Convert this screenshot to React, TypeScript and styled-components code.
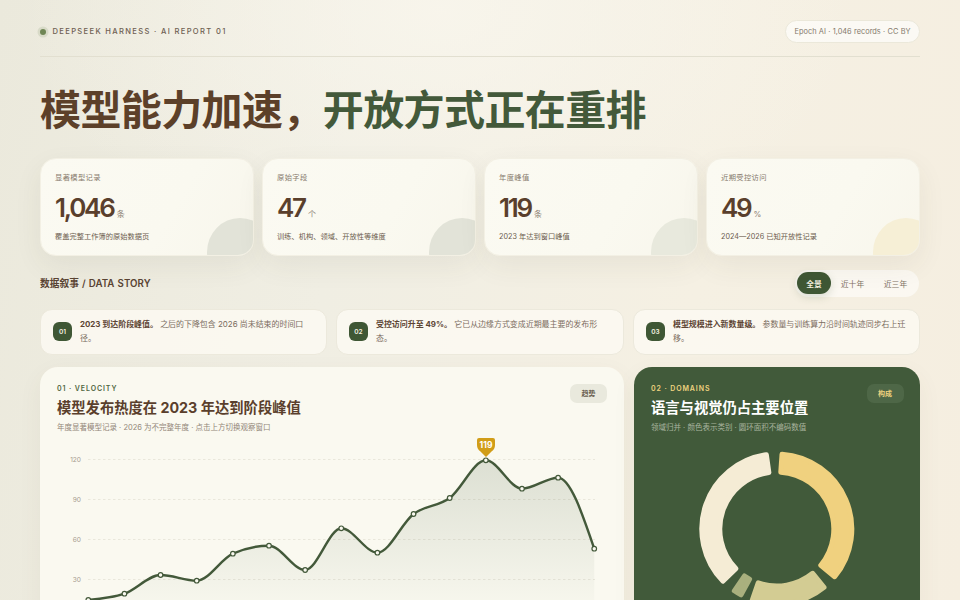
import React from "react";
import styled, { createGlobalStyle } from "styled-components";

const Global = createGlobalStyle`
  html, body { margin: 0; padding: 0; width: 960px; height: 600px; overflow: hidden; }
  body {
    font-family: Inter, "Noto Sans CJK SC", "Noto Sans", sans-serif;
    color: #5a3f2c;
    background:
      radial-gradient(ellipse 420px 260px at 440px 10px, rgba(250,247,238,.75), rgba(250,247,238,0)),
      linear-gradient(100deg, #ebe9dc 0%, #f0eee3 35%, #f5f0e3 70%, #f5eee0 100%);
  }
`;

const Page = styled.div`
  width: 960px;
  height: 600px;
  box-sizing: border-box;
  padding: 20px 40px 0;
  overflow: hidden;
`;
const TopBar = styled.header`
  display: flex;
  align-items: center;
  justify-content: space-between;
  padding-bottom: 13px;
  border-bottom: 1px solid #e2dfd0;
`;
const Brand = styled.div`
  display: flex;
  align-items: center;
  gap: 6.5px;
  font-size: 7.6px;
  font-weight: 500;
  letter-spacing: 1.33px;
  color: #6e6052;
`;
const Dot = styled.span`
  width: 6px;
  height: 6px;
  border-radius: 50%;
  background: #6f8654;
  box-shadow: 0 0 0 2.5px rgba(111,134,84,.16);
`;
const SourcePill = styled.div`
  height: 23px;
  box-sizing: border-box;
  display: flex;
  align-items: center;
  padding: 0 8.5px;
  border-radius: 12px;
  border: 1px solid #ebe8da;
  background: rgba(255,255,255,.62);
  font-size: 7.4px;
  word-spacing: .25px;
  color: #85796d;
`;
const Title = styled.h1`
  margin: 26px 0 0;
  height: 54px;
  line-height: 54px;
  font-size: 41px;
  font-weight: 700;
  letter-spacing: -.6px;
  color: #5c4029;
  white-space: nowrap;
`;
const Accent = styled.span`
  color: #43593a;
`;
const Stats = styled.section`
  margin-top: 21px;
  display: grid;
  grid-template-columns: repeat(4, 1fr);
  gap: 8px;
`;
const StatCard = styled.article`
  position: relative;
  overflow: hidden;
  height: 98px;
  box-sizing: border-box;
  padding: 14px 14px 0;
  border-radius: 16px;
  border: 1px solid #f3f0e4;
  background: linear-gradient(120deg, #fbfaf2 0%, #faf9f0 60%, #f8f6ec 100%);
  box-shadow: 0 10px 28px rgba(70,70,40,.07);
`;
const Bubble = styled.span<{ $tone: string }>`
  position: absolute;
  right: -20px;
  bottom: -31px;
  width: 66px;
  height: 68px;
  border-radius: 50%;
  background: ${(p) => p.$tone};
`;
const StatLabel = styled.div`
  font-size: 7.3px;
  line-height: 9px;
  letter-spacing: .35px;
  color: #887b6e;
`;
const StatValueRow = styled.div`
  margin-top: 11px;
  height: 30px;
  display: flex;
  align-items: baseline;
  gap: 3px;
`;
const StatValue = styled.span`
  font-size: 26px;
  line-height: 30px;
  font-weight: 600;
  letter-spacing: -2.2px;
  color: #5a3f2c;
`;
const StatUnit = styled.span`
  font-size: 8px;
  color: #8d8174;
`;
const StatNote = styled.div`
  margin-top: 9px;
  font-size: 7.25px;
  line-height: 10px;
  color: #6c5c4e;
`;
const SectionRow = styled.div`
  margin-top: 13.5px;
  height: 27px;
  display: flex;
  align-items: center;
  justify-content: space-between;
`;
const SectionTitle = styled.h2`
  margin: 0;
  font-size: 9.7px;
  font-weight: 600;
  letter-spacing: .05px;
  word-spacing: .6px;
  color: #5a4433;
`;
const Segments = styled.div`
  width: 124px;
  height: 27px;
  box-sizing: border-box;
  padding: 2px;
  margin-right: 1px;
  display: flex;
  align-items: center;
  border-radius: 14px;
  background: rgba(255,255,255,.55);
`;
const Segment = styled.span<{ $active?: boolean }>`
  flex: 0 0 ${(p) => (p.$active ? "34px" : "43px")};
  height: 22px;
  display: flex;
  align-items: center;
  justify-content: center;
  border-radius: 11px;
  font-size: 7.8px;
  color: ${(p) => (p.$active ? "#f7f3e3" : "#7f7264")};
  background: ${(p) => (p.$active ? "#3f5735" : "transparent")};
  font-weight: ${(p) => (p.$active ? 600 : 400)};
  box-shadow: ${(p) => (p.$active ? "0 3px 8px rgba(63,87,53,.18)" : "none")};
`;
const Insights = styled.section`
  margin-top: 12px;
  display: grid;
  grid-template-columns: 287px 288px 1fr;
  gap: 9px;
`;
const Insight = styled.article`
  height: 46px;
  box-sizing: border-box;
  display: flex;
  align-items: center;
  gap: 8px;
  padding: 0 12px;
  border-radius: 12px;
  border: 1px solid #ece9dc;
  background: rgba(252,250,243,.8);
`;
const Num = styled.span`
  flex: 0 0 19px;
  height: 19px;
  display: flex;
  align-items: center;
  justify-content: center;
  border-radius: 6px;
  background: #3f5735;
  color: #f7f3e3;
  font-size: 6.5px;
  font-weight: 600;
`;
const InsightText = styled.p`
  margin: 0;
  font-size: 7.95px;
  line-height: 13.4px;
  color: #7b6d5f;
`;
const InsightLead = styled.strong`
  font-weight: 700;
  color: #5c4433;
`;
const Panels = styled.section`
  margin-top: 12.5px;
  display: grid;
  grid-template-columns: minmax(0, 1fr) 286px;
  gap: 10.5px;
`;
const Panel = styled.article<{ $dark?: boolean }>`
  position: relative;
  height: 330px;
  box-sizing: border-box;
  padding: 17px;
  border-radius: 18px;
  background: ${(p) => (p.$dark ? "#415a3a" : "#faf9f0")};
  box-shadow: 0 8px 24px rgba(96,80,50,.06);
`;
const Kicker = styled.div<{ $dark?: boolean }>`
  font-size: 7px;
  line-height: 9px;
  font-weight: 600;
  letter-spacing: .9px;
  color: ${(p) => (p.$dark ? "#eed27f" : "#50663f")};
`;
const PanelTitle = styled.h3<{ $dark?: boolean }>`
  margin: 4px 0 0;
  font-size: 14.3px;
  line-height: 22px;
  font-weight: 700;
  color: ${(p) => (p.$dark ? "#ffffff" : "#5a3f2c")};
`;
const PanelSub = styled.p<{ $dark?: boolean }>`
  margin: 3px 0 0;
  font-size: 7.5px;
  line-height: 11px;
  color: ${(p) => (p.$dark ? "#a8b49f" : "#928678")};
`;
const Tag = styled.span<{ $dark?: boolean }>`
  position: absolute;
  top: 16.5px;
  right: 16.5px;
  width: 37px;
  height: 19px;
  display: flex;
  align-items: center;
  justify-content: center;
  border-radius: 7px;
  font-size: 7px;
  font-weight: 600;
  color: ${(p) => (p.$dark ? "#eed27f" : "#6a5f50")};
  background: ${(p) => (p.$dark ? "#4e6747" : "#e9e9dd")};
`;
const ChartSvg = styled.svg`
  display: block;
  margin: -3px 0 0 -17px;
`;
const DonutSvg = styled.svg`
  display: block;
  margin: -3px 0 0 -17px;
`;
const Tick = styled.text`
  font-size: 6.6px;
  fill: #a79c8e;
  text-anchor: end;
`;
const PinText = styled.text`
  font-size: 8.5px;
  font-weight: 700;
  fill: #fff;
  text-anchor: middle;
`;

/* chart: coordinates are page coordinates minus (40, 430) */
const ys = [600, 593.7, 575, 580.7, 553.7, 545.7, 570, 528.3, 552.7, 514, 498, 460.3, 488.7, 477.7, 548.7];
const pts = ys.map((y, i) => [48.3 + i * 36.14, y - 430] as const);

/* monotone-x interpolation */
function monotone(points: readonly (readonly [number, number])[]) {
  const n = points.length;
  const t: number[] = new Array(n).fill(0);
  for (let i = 1; i < n - 1; i++) {
    const h0 = points[i][0] - points[i - 1][0];
    const h1 = points[i + 1][0] - points[i][0];
    const s0 = (points[i][1] - points[i - 1][1]) / h0;
    const s1 = (points[i + 1][1] - points[i][1]) / h1;
    const p = (s0 * h1 + s1 * h0) / (h0 + h1);
    t[i] = (Math.sign(s0) + Math.sign(s1)) * Math.min(Math.abs(s0), Math.abs(s1), 0.5 * Math.abs(p));
  }
  const slope = (a: number, b: number) => (points[b][1] - points[a][1]) / (points[b][0] - points[a][0]);
  t[0] = (3 * slope(0, 1) - t[1]) / 2;
  t[n - 1] = (3 * slope(n - 2, n - 1) - t[n - 2]) / 2;
  let d = `M${points[0][0]} ${points[0][1]}`;
  for (let i = 0; i < n - 1; i++) {
    const h = (points[i + 1][0] - points[i][0]) / 3;
    d += ` C${(points[i][0] + h).toFixed(2)} ${(points[i][1] + h * t[i]).toFixed(2)} ${(points[i + 1][0] - h).toFixed(2)} ${(points[i + 1][1] - h * t[i + 1]).toFixed(2)} ${points[i + 1][0].toFixed(2)} ${points[i + 1][1].toFixed(2)}`;
  }
  return d;
}
const line = monotone(pts);
const area = `${line} L${pts[14][0]} 189.5 L${pts[0][0]} 189.5 Z`;

/* donut: angles in degrees clockwise from 12 o'clock */
const CX = 142.8;
const CY = 99;
const polar = (r: number, a: number) => {
  const t = ((a - 90) * Math.PI) / 180;
  return `${(CX + r * Math.cos(t)).toFixed(2)} ${(CY + r * Math.sin(t)).toFixed(2)}`;
};
function sector(a0: number, a1: number) {
  const R = 75;
  const r = 57;
  const large = a1 - a0 > 180 ? 1 : 0;
  return `M${polar(R, a0)} A${R} ${R} 0 ${large} 1 ${polar(R, a1)} L${polar(r, a1)} A${r} ${r} 0 ${large} 0 ${polar(r, a0)} Z`;
}
const slices = [
  { a0: 4, a1: 129.5, c: "#f0d17f" },
  { a0: 141, a1: 199, c: "#d3cc93" },
  { a0: 208.5, a1: 214.5, c: "#a9b07e" },
  { a0: 226, a1: 352, c: "#f5ecd5" },
];

const stats = [
  { label: "显著模型记录", value: "1,046", unit: "条", note: "覆盖完整工作簿的原始数据页", tone: "#e2e3d8" },
  { label: "原始字段", value: "47", unit: "个", note: "训练、机构、领域、开放性等维度", tone: "#e2e3d8" },
  { label: "年度峰值", value: "119", unit: "条", note: "2023 年达到窗口峰值", tone: "#e8e9dd" },
  { label: "近期受控访问", value: "49", unit: "%", note: "2024—2026 已知开放性记录", tone: "#f6efd6" },
];
const insights = [
  { n: "01", lead: "2023 到达阶段峰值。", rest: "之后的下降包含 2026 尚未结束的时间口径。" },
  { n: "02", lead: "受控访问升至 49%。", rest: "它已从边缘方式变成近期最主要的发布形态。" },
  { n: "03", lead: "模型规模进入新数量级。", rest: "参数量与训练算力沿时间轨迹同步右上迁移。" },
];

export default function App() {
  return (
    <Page>
      <Global />
      <TopBar>
        <Brand>
          <Dot />
          DEEPSEEK HARNESS · AI REPORT 01
        </Brand>
        <SourcePill>Epoch AI · 1,046 records · CC BY</SourcePill>
      </TopBar>
      <Title>
        模型能力加速，<Accent>开放方式正在重排</Accent>
      </Title>
      <Stats>
        {stats.map((s) => (
          <StatCard key={s.label}>
            <StatLabel>{s.label}</StatLabel>
            <StatValueRow>
              <StatValue>{s.value}</StatValue>
              <StatUnit>{s.unit}</StatUnit>
            </StatValueRow>
            <StatNote>{s.note}</StatNote>
            <Bubble $tone={s.tone} />
          </StatCard>
        ))}
      </Stats>
      <SectionRow>
        <SectionTitle>数据叙事 / DATA STORY</SectionTitle>
        <Segments>
          <Segment $active>全景</Segment>
          <Segment>近十年</Segment>
          <Segment>近三年</Segment>
        </Segments>
      </SectionRow>
      <Insights>
        {insights.map((i) => (
          <Insight key={i.n}>
            <Num>{i.n}</Num>
            <InsightText>
              <InsightLead>{i.lead}</InsightLead> {i.rest}
            </InsightText>
          </Insight>
        ))}
      </Insights>
      <Panels>
        <Panel>
          <Kicker>01 · VELOCITY</Kicker>
          <PanelTitle>模型发布热度在 2023 年达到阶段峰值</PanelTitle>
          <PanelSub>年度显著模型记录 · 2026 为不完整年度 · 点击上方切换观察窗口</PanelSub>
          <Tag>趋势</Tag>
          <ChartSvg width="584" height="190" viewBox="0 0 584 190">
            <defs>
              <linearGradient id="areaFill" x1="0" y1="30" x2="0" y2="170" gradientUnits="userSpaceOnUse">
                <stop offset="0" stopColor="#415a3a" stopOpacity=".16" />
                <stop offset="1" stopColor="#415a3a" stopOpacity=".02" />
              </linearGradient>
            </defs>
            {[
              ["120", 29.5],
              ["90", 69.5],
              ["60", 109.5],
              ["30", 149.5],
            ].map(([t, y]) => (
              <g key={t}>
                <Tick x="41" y={Number(y) + 2.4}>
                  {t}
                </Tick>
                <line x1="48" x2="555" y1={y} y2={y} stroke="#e5e2d5" strokeWidth=".8" strokeDasharray="2.5 2.5" />
              </g>
            ))}
            <path d={area} fill="url(#areaFill)" />
            <path d={line} fill="none" stroke="#43593a" strokeWidth="2.4" strokeLinejoin="round" strokeLinecap="round" />
            {pts.map(([x, y]) => (
              <circle key={x} cx={x} cy={y} r="2.3" fill="#faf9f0" stroke="#43593a" strokeWidth="1.2" />
            ))}
            <path
              d="M439 8 H453 Q455 8 455 10 V15 Q455 19 451.5 21.5 L446 27 L440.5 21.5 Q437 19 437 15 V10 Q437 8 439 8 Z"
              fill="#d19d18"
            />
            <PinText x="446" y="17.5">
              119
            </PinText>
          </ChartSvg>
        </Panel>
        <Panel $dark>
          <Kicker $dark>02 · DOMAINS</Kicker>
          <PanelTitle $dark>语言与视觉仍占主要位置</PanelTitle>
          <PanelSub $dark>领域归并 · 颜色表示类别 · 圆环面积不编码数值</PanelSub>
          <Tag $dark>构成</Tag>
          <DonutSvg width="286" height="190" viewBox="0 0 286 190">
            {slices.map((s) => (
              <path
                key={s.c}
                d={sector(s.a0, s.a1)}
                fill={s.c}
                stroke={s.c}
                strokeWidth="5"
                strokeLinejoin="round"
              />
            ))}
          </DonutSvg>
        </Panel>
      </Panels>
    </Page>
  );
}
